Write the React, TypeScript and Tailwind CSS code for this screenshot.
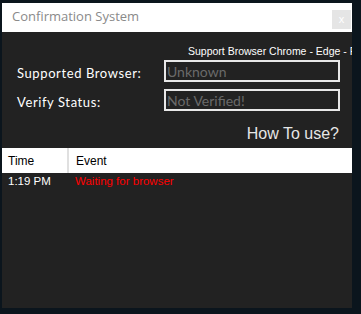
export default function App() {
  return (
    <div className="w-[361px] h-[314px] bg-[#0b151d] pt-[3px] pl-[2px] overflow-hidden">
      <div className="w-[350px] h-[305px] bg-[#222222] flex flex-col overflow-hidden">
        {/* title bar */}
        <div className="h-[29px] bg-white flex items-start justify-between shrink-0">
          <span className="pl-[10px] pt-[5px] text-[13px] leading-[16px] text-[#8a8a8a] font-['Open_Sans',sans-serif]">
            Confirmation System
          </span>
          <div className="mt-[7px] mr-[1px] w-[19px] h-[19px] bg-[#e5e5e5] flex items-center justify-center text-white text-[11px] leading-none font-['Liberation_Sans',sans-serif]">
            x
          </div>
        </div>

        <div className="pt-[13px] pl-[186px] whitespace-nowrap text-[10.5px] leading-[13px] text-white font-['Liberation_Sans',sans-serif]">
          Support Browser Chrome - Edge - Firefox
        </div>

        <div className="mt-[2px] flex flex-col gap-[7px] pl-[15px]">
          <div className="flex items-end">
            <span className="w-[147px] pb-[1px] text-[13px] leading-[16px] text-white font-['Lato',sans-serif] tracking-[0.6px]">
              Supported Browser:
            </span>
            <div className="w-[176px] h-[22px] border-2 border-[#e8e8e8] flex items-center pl-[1px] text-[14px] text-[#6a6a6a] font-['Lato',sans-serif]">
              Unknown
            </div>
          </div>
          <div className="flex items-end">
            <span className="w-[147px] pb-[1px] text-[13px] leading-[16px] text-white font-['Lato',sans-serif] tracking-[0.6px]">
              Verify Status:
            </span>
            <div className="w-[176px] h-[22px] border-2 border-[#e8e8e8] flex items-center pl-[1px] text-[14px] text-[#6a6a6a] font-['Lato',sans-serif]">
              Not Verified!
            </div>
          </div>
        </div>

        <div className="mt-[13px] pr-[13px] text-right text-[16px] leading-[19px] text-[#e6e6e6] font-['Liberation_Sans',sans-serif]">
          How To use?
        </div>

        {/* log table */}
        <div className="mt-[5px] h-[25px] bg-white flex text-[12px] text-black font-['Liberation_Sans',sans-serif]">
          <div className="w-[67px] border-r-2 border-[#e0e0e0] flex items-center pl-[6px]">Time</div>
          <div className="flex items-center pl-[7px]">Event</div>
        </div>
        <div className="h-[18px] flex items-center text-[11.5px] font-['Liberation_Sans',sans-serif]">
          <div className="w-[69px] pl-[6px] text-white">1:19 PM</div>
          <div className="pl-[4px] text-[#ff0000]">Waiting for browser</div>
        </div>
      </div>
    </div>
  );
}
